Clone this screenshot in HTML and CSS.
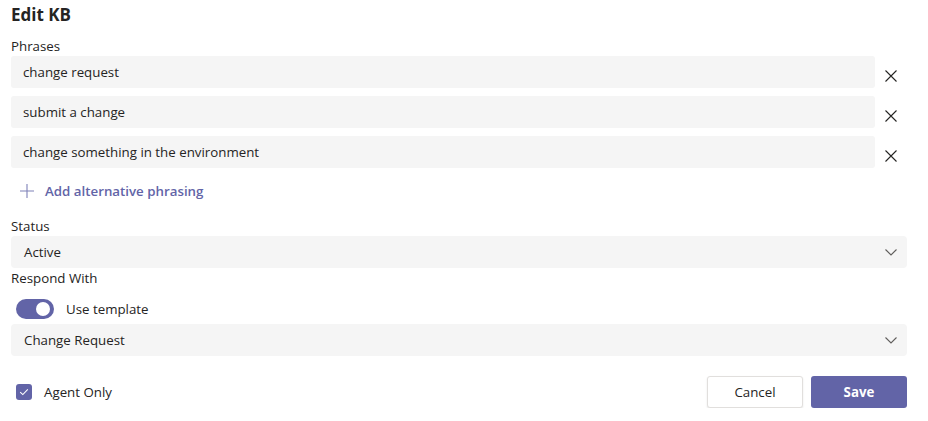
FILE: index.html
```html
<!DOCTYPE html>
<html>
<head>
<meta charset="utf-8">
<link rel="stylesheet" href="styles.css">
</head>
<body>
<div class="panel">
  <h1 class="title">Edit KB</h1>
  <div class="label">Phrases</div>
  <div class="phrases">
    <div class="phrase-row">
      <div class="input">change request</div>
      <button class="remove" aria-label="Remove"><svg width="12" height="12" viewBox="0 0 12 12"><path d="M0.5 0.5L11.5 11.5M11.5 0.5L0.5 11.5" stroke="#252423" stroke-width="1.1" fill="none"/></svg></button>
    </div>
    <div class="phrase-row">
      <div class="input">submit a change</div>
      <button class="remove" aria-label="Remove"><svg width="12" height="12" viewBox="0 0 12 12"><path d="M0.5 0.5L11.5 11.5M11.5 0.5L0.5 11.5" stroke="#252423" stroke-width="1.1" fill="none"/></svg></button>
    </div>
    <div class="phrase-row">
      <div class="input">change something in the environment</div>
      <button class="remove" aria-label="Remove"><svg width="12" height="12" viewBox="0 0 12 12"><path d="M0.5 0.5L11.5 11.5M11.5 0.5L0.5 11.5" stroke="#252423" stroke-width="1.1" fill="none"/></svg></button>
    </div>
  </div>
  <div class="add">
    <svg width="14" height="14" viewBox="0 0 14 14"><path d="M7 0V14M0 7H14" stroke="#7f81b8" stroke-width="1.1" fill="none"/></svg>
    <span>Add alternative phrasing</span>
  </div>
  <div class="label">Status</div>
  <div class="select"><span>Active</span><svg width="12" height="7" viewBox="0 0 12 7"><path d="M0.5 0.5L6 6L11.5 0.5" stroke="#605e5c" stroke-width="1.1" fill="none"/></svg></div>
  <div class="label respond-label">Respond With</div>
  <div class="toggle-row">
    <span class="toggle"><span class="knob"></span></span>
    <span>Use template</span>
  </div>
  <div class="select"><span>Change Request</span><svg width="12" height="7" viewBox="0 0 12 7"><path d="M0.5 0.5L6 6L11.5 0.5" stroke="#605e5c" stroke-width="1.1" fill="none"/></svg></div>
  <div class="footer">
    <div class="check-row">
      <span class="checkbox"><svg width="10" height="8" viewBox="0 0 10 8"><path d="M1.2 4.2L3.8 6.6L8.8 1.4" stroke="#fff" stroke-width="1.1" fill="none"/></svg></span>
      <span>Agent Only</span>
    </div>
    <div class="buttons">
      <button class="btn cancel">Cancel</button>
      <button class="btn save">Save</button>
    </div>
  </div>
</div>
</body>
</html>
```
FILE: styles.css
```css
* { box-sizing: border-box; }
html, body { margin: 0; padding: 0; background: #fff; }
body {
  font-family: "Open Sans", "Noto Sans", sans-serif;
  font-size: 13.3px;
  color: #252423;
}
.panel {
  width: 928px;
  padding: 0 21px 0 11px;
}
.title {
  margin: 0;
  font-size: 17px;
  font-weight: 700;
  line-height: 24px;
  padding-top: 3px;
  height: 32px;
}
.label {
  height: 24px;
  line-height: 20px;
  padding-top: 4px;
}
.phrases { display: flex; flex-direction: column; gap: 8px; }
.phrase-row { display: flex; align-items: center; }
.input {
  width: 864px;
  height: 32px;
  line-height: 32px;
  background: #f5f5f5;
  border-radius: 3px;
  padding: 0 12px;
}
.remove {
  margin-left: 10px;
  margin-top: 8px;
  border: 0;
  background: none;
  padding: 0;
  width: 12px;
  height: 12px;
  display: flex;
}
.add {
  display: flex;
  align-items: center;
  height: 44px;
  padding: 2px 0 0 9px;
  gap: 11px;
  color: #6264a7;
  font-weight: 600;
}
.select {
  height: 32px;
  background: #f5f5f5;
  border-radius: 4px;
  padding: 0 10px 0 13px;
  display: flex;
  align-items: center;
  justify-content: space-between;
}
.respond-label { height: 20px; padding-top: 0; }
.toggle-row {
  display: flex;
  align-items: center;
  gap: 12px;
  height: 36px;
  padding: 6px 0 0 5px;
}
.toggle {
  width: 38px;
  height: 20px;
  background: #6264a7;
  border-radius: 10px;
  display: flex;
  align-items: center;
  justify-content: flex-end;
  padding-right: 4px;
}
.knob {
  width: 14px;
  height: 14px;
  background: #fff;
  border-radius: 50%;
}
.footer {
  display: flex;
  justify-content: space-between;
  align-items: center;
  margin-top: 20px;
}
.check-row {
  display: flex;
  align-items: center;
  gap: 12px;
  padding-left: 5px;
}
.checkbox {
  width: 16px;
  height: 16px;
  background: #6264a7;
  border-radius: 3px;
  display: flex;
  align-items: center;
  justify-content: center;
}
.buttons { display: flex; gap: 8px; }
.btn {
  width: 96px;
  height: 32px;
  border-radius: 3px;
  font-family: inherit;
  font-size: 13.3px;
  cursor: pointer;
}
.cancel {
  background: #fff;
  border: 1px solid #e1dfdd;
  color: #252423;
  box-shadow: 0 1px 2px rgba(0,0,0,0.1);
}
.save {
  background: #6264a7;
  border: 0;
  color: #fff;
  font-weight: 700;
}
```
